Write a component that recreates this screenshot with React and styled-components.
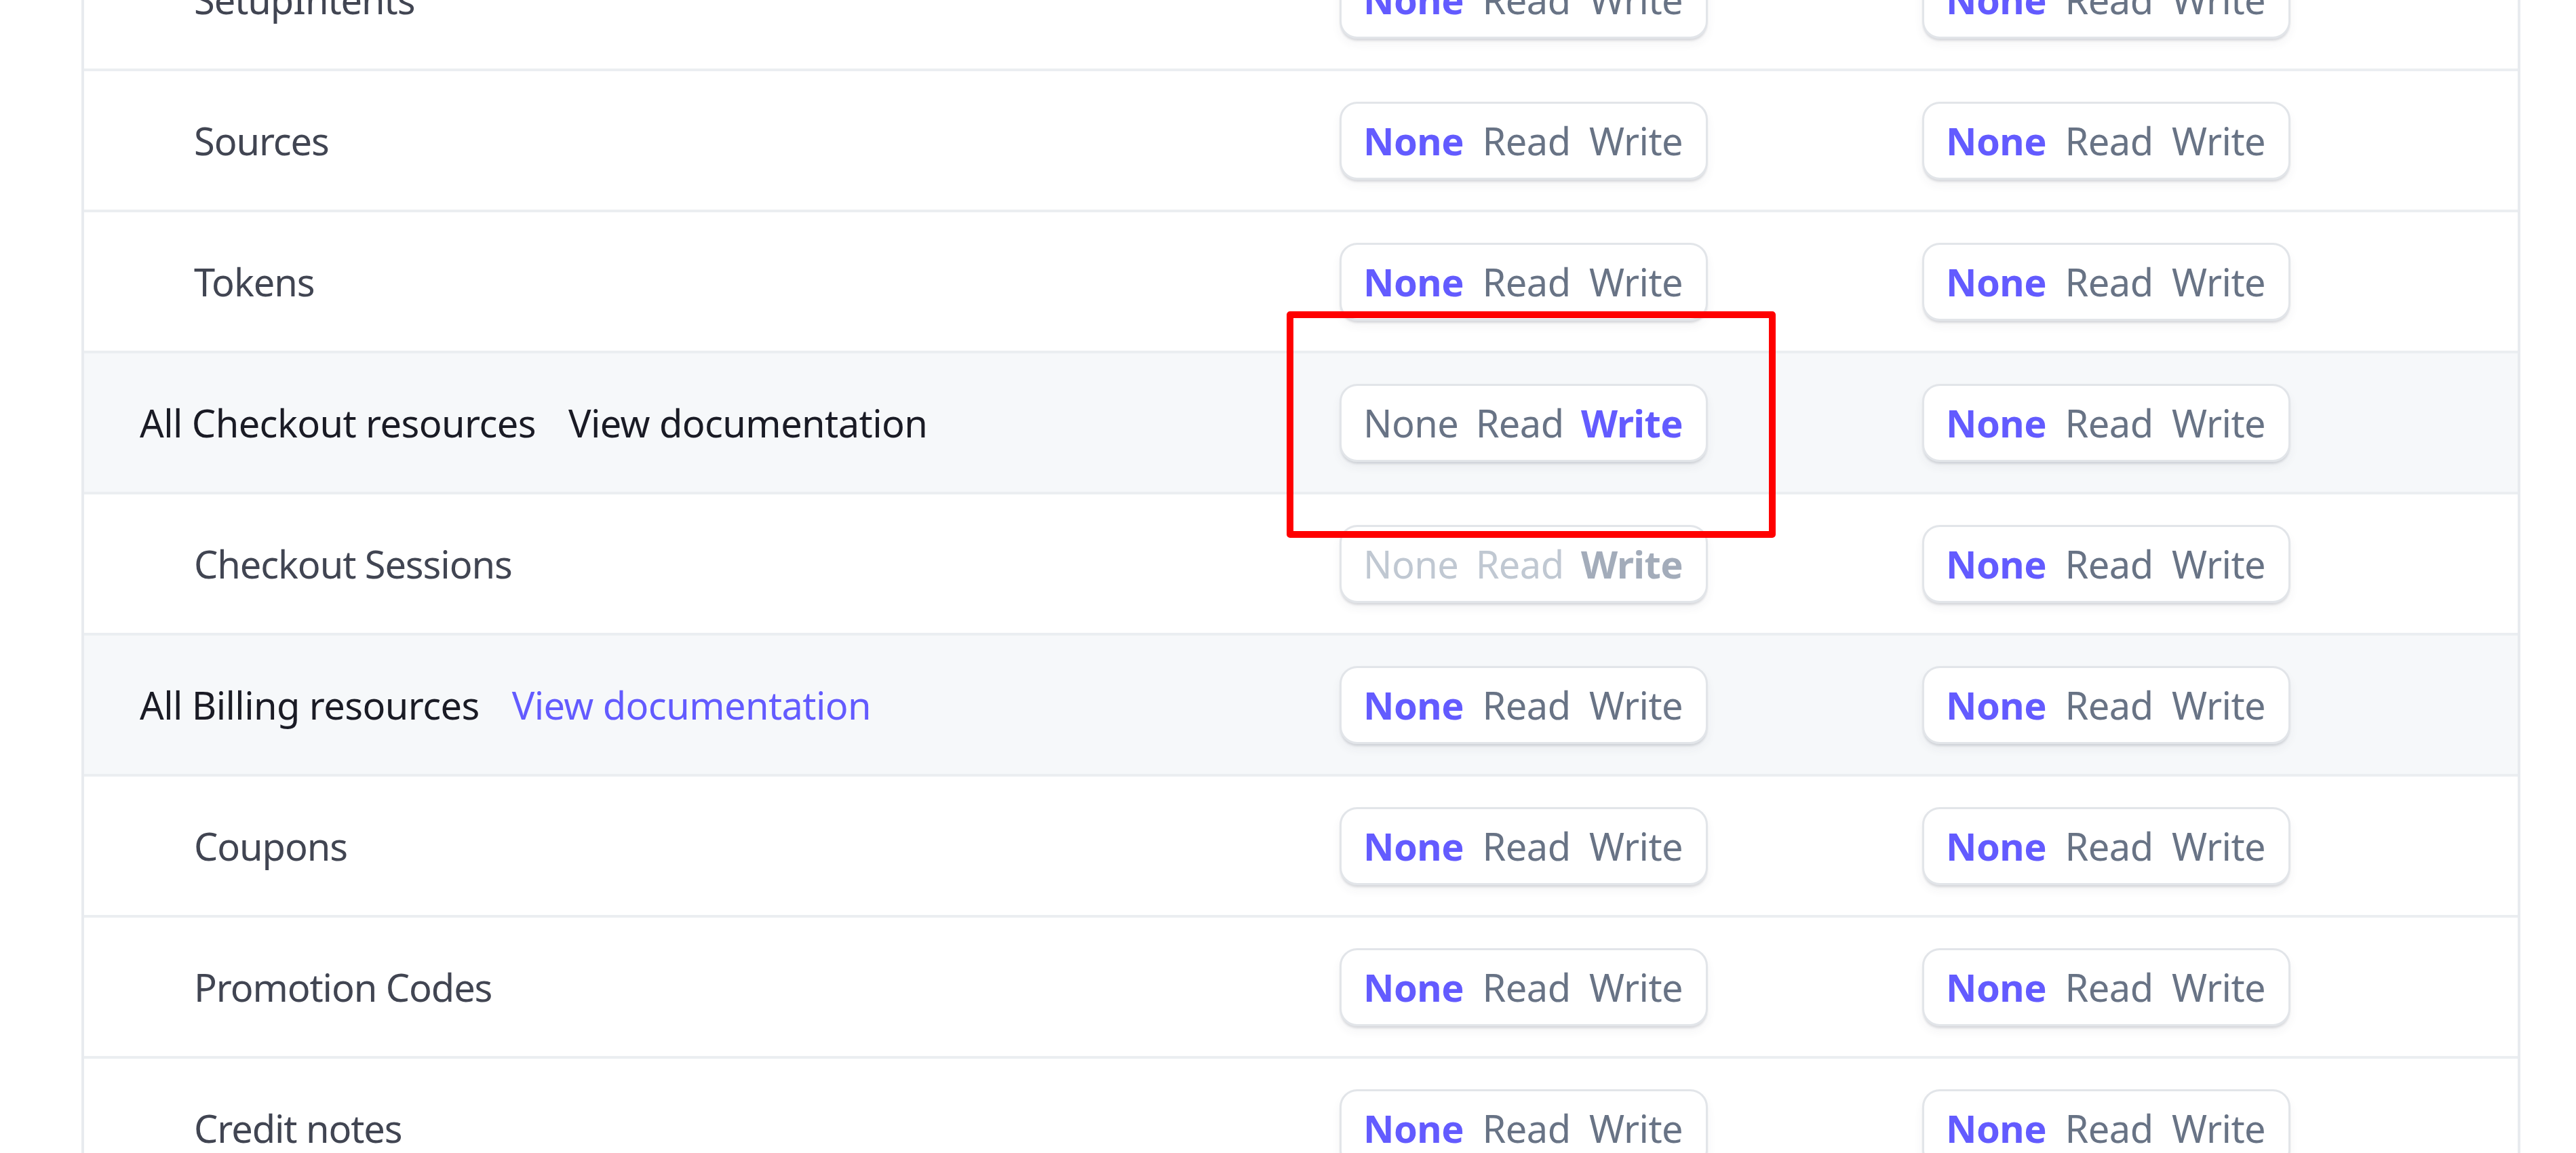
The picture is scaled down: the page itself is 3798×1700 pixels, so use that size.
import React from "react";
import styled, { createGlobalStyle } from "styled-components";

const GlobalStyle = createGlobalStyle`
    html, body {
        margin: 0;
        padding: 0;
        background: #ffffff;
        overflow: hidden;
        font-family: "Noto Sans", "Open Sans", Arial, sans-serif;
    }
`;

const Page = styled.div`
    width: 3798px;
    height: 1700px;
    overflow: hidden;
`;

const Table = styled.div`
    margin-top: -103px;
    margin-left: 120px;
    width: 3596px;
    box-sizing: border-box;
    border-left: 4px solid #e8ebef;
    border-right: 4px solid #e8ebef;
`;

const Row = styled.div`
    display: grid;
    grid-template-columns: 1851px 859px 1fr;
    align-items: center;
    height: 208px;
    box-sizing: border-box;
    border-bottom: 4px solid #ebeef1;
    background: ${(p) => (p.$group ? "#f6f8fa" : "#ffffff")};
`;

const Label = styled.div`
    display: flex;
    align-items: center;
    gap: 48px;
    padding-left: ${(p) => (p.$group ? "82px" : "162px")};
    font-size: 56px;
    letter-spacing: ${(p) => (p.$group ? "-0.6px" : "-1.1px")};
    color: ${(p) => (p.$group ? "#1a1b25" : "#414552")};
    white-space: nowrap;
`;

const DocLink = styled.a`
    color: ${(p) => (p.$muted ? "#1a1b25" : "#635bff")};
    text-decoration: none;
`;

const Cell = styled.div`
    position: relative;
    display: flex;
    align-items: center;
`;

const Segmented = styled.div`
    width: 543px;
    height: 115px;
    box-sizing: border-box;
    display: flex;
    align-items: center;
    justify-content: space-between;
    padding: 0 34px 0 32px;
    background: #ffffff;
    border: 3px solid #e2e5e9;
    border-radius: 26px;
    box-shadow: 0 4px 3px -1px rgba(60, 66, 87, 0.16), 0 8px 14px rgba(60, 66, 87, 0.05);
`;

const Option = styled.span`
    font-size: 56px;
    letter-spacing: -0.6px;
    font-weight: ${(p) => (p.$active ? 700 : 400)};
    color: ${(p) => {
        if (p.$disabled) return p.$active ? "#a3acba" : "#c0c8d2";
        return p.$active ? "#635bff" : "#687385";
    }};
`;

const Highlight = styled.span`
    position: absolute;
    left: -78px;
    top: -107px;
    width: 721px;
    height: 334px;
    box-sizing: border-box;
    border: 10px solid #ff0000;
    border-radius: 5px;
    pointer-events: none;
    z-index: 2;
`;

const OPTIONS = ["None", "Read", "Write"];

const Toggle = ({ value = "None", disabled, highlight }) => (
    <Cell>
        <Segmented>
            {OPTIONS.map((o) => (
                <Option key={o} $active={o === value} $disabled={disabled}>
                    {o}
                </Option>
            ))}
        </Segmented>
        {highlight && <Highlight />}
    </Cell>
);

const rows = [
    { name: "SetupIntents" },
    { name: "Sources" },
    { name: "Tokens" },
    {
        name: "All Checkout resources",
        group: true,
        doc: "muted",
        first: { value: "Write", highlight: true },
    },
    { name: "Checkout Sessions", first: { value: "Write", disabled: true } },
    { name: "All Billing resources", group: true, doc: "link" },
    { name: "Coupons" },
    { name: "Promotion Codes" },
    { name: "Credit notes" },
];

const App = () => {
    return (
        <Page>
            <GlobalStyle />
            <Table>
                {rows.map((r) => (
                    <Row key={r.name} $group={r.group}>
                        <Label $group={r.group}>
                            {r.name}
                            {r.doc && (
                                <DocLink $muted={r.doc === "muted"}>
                                    View documentation
                                </DocLink>
                            )}
                        </Label>
                        <Toggle {...(r.first || {})} />
                        <Toggle />
                    </Row>
                ))}
            </Table>
        </Page>
    );
};

export default App;
